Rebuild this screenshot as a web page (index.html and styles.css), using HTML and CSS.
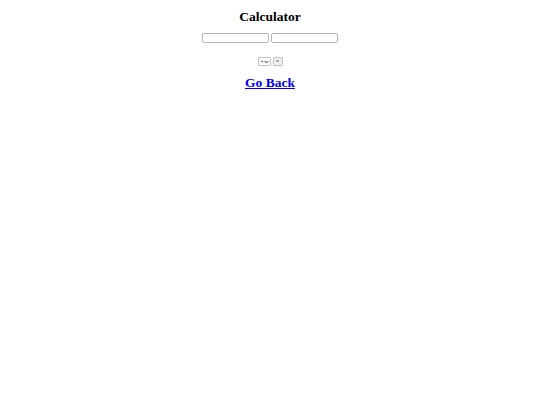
FILE: index.html
```html
<!DOCTYPE html>
<html>
<head>
<meta charset="utf-8">
<title>Calculator</title>
<link rel="stylesheet" href="styles.css">
</head>
<body>
<div class="page">
  <h2 class="title">Calculator</h2>
  <div class="inputs">
    <input class="num" type="text">
    <input class="num" type="text">
  </div>
  <div class="ops">
    <select class="op"><option>+</option><option>-</option><option>*</option><option>/</option></select>
    <button class="eq">=</button>
  </div>
  <a class="back" href="#">Go Back</a>
</div>
</body>
</html>
```
FILE: styles.css
```css
html, body { margin: 0; padding: 0; background: #fff; }
.page {
  font-family: "Liberation Serif", "Times New Roman", serif;
  display: flex;
  flex-direction: column;
  align-items: center;
  padding-top: 8px;
}
.title {
  margin: 0;
  font-size: 13.5px;
  font-weight: bold;
  line-height: 17px;
  color: #000;
}
.inputs {
  display: flex;
  gap: 2px;
  margin-top: 8px;
}
.num {
  box-sizing: border-box;
  width: 67px;
  height: 10px;
  padding: 0;
  border: 1px solid #b4b4b4;
  border-radius: 2px;
  background: #fff;
}
.ops {
  display: flex;
  gap: 2px;
  margin-top: 14px;
}
.op {
  -webkit-appearance: none;
  appearance: none;
  box-sizing: border-box;
  width: 13px;
  height: 9px;
  padding: 0 0 0 2px;
  font-family: "Liberation Sans", Arial, sans-serif;
  font-size: 5px;
  line-height: 7px;
  color: #444;
  border: 1px solid #c4c4c4;
  border-radius: 1px;
  background: #fff url("data:image/svg+xml;utf8,<svg xmlns='http://www.w3.org/2000/svg' width='5' height='4' viewBox='0 0 5 4'><path d='M0.7 1 L2.5 3 L4.3 1' fill='none' stroke='%23444' stroke-width='1'/></svg>") no-repeat right 1px center;
  background-size: 5px 4px;
}
.eq {
  box-sizing: border-box;
  width: 10px;
  height: 9px;
  padding: 0;
  font-family: "Liberation Sans", Arial, sans-serif;
  font-size: 5px;
  line-height: 5px;
  color: #555;
  border: 1px solid #c4c4c4;
  border-radius: 1px;
  background: #efefef;
}
.back {
  margin-top: 9px;
  font-size: 13.5px;
  font-weight: bold;
  line-height: 16px;
  color: #0000ee;
  text-decoration: underline;
}
```
